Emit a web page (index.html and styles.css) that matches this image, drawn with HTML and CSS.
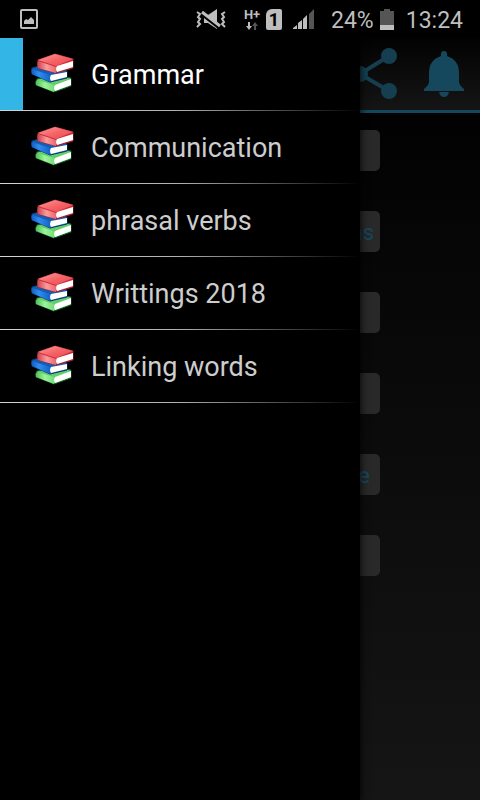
FILE: index.html
```html
<!DOCTYPE html>
<html lang="en">
<head>
<meta charset="utf-8">
<meta name="viewport" content="width=device-width, initial-scale=1">
<title>Grammar</title>
<link rel="stylesheet" href="styles.css">
</head>
<body>
<svg class="defs" width="0" height="0" aria-hidden="true">
  <defs>
    <linearGradient id="redTop" x1="0" y1="0" x2="1" y2="1"><stop offset="0" stop-color="#ff9a9a"/><stop offset=".5" stop-color="#f56468"/><stop offset="1" stop-color="#e8484e"/></linearGradient>
    <linearGradient id="redSide" x1="0" y1="0" x2="1" y2="0"><stop offset="0" stop-color="#c8444c"/><stop offset=".5" stop-color="#ff9a9c"/><stop offset="1" stop-color="#e8686e"/></linearGradient>
    <linearGradient id="blueSide" x1="0" y1="0" x2="1" y2="0"><stop offset="0" stop-color="#0f5fc0"/><stop offset=".4" stop-color="#2f8cf0"/><stop offset="1" stop-color="#1765c8"/></linearGradient>
    <linearGradient id="greenSide" x1="0" y1="0" x2="1" y2="0"><stop offset="0" stop-color="#4fbd55"/><stop offset=".5" stop-color="#9df59a"/><stop offset="1" stop-color="#74dd76"/></linearGradient>
    <symbol id="books" viewBox="0 0 44 44">
      <g stroke-linejoin="round" stroke-width="1">
        <path d="M6 27l16-4 18 3v8l-17 6-18-7q-1-3 1-6z" fill="#62cf68" stroke="#0d5a2a"/>
        <path d="M6 28l17 5v7L5 33q-1-3 1-5z" fill="url(#greenSide)"/>
        <path d="M24 33l16-6v6l-16 6q-2-3 0-6z" fill="#fff"/>
        <path d="M1 16l10-3 25 6v7l-17 4L1 22q-1-3 0-6z" fill="#155cb5" stroke="#0a3674"/>
        <path d="M1 17l18 6v7L1 22q-1-3 0-5z" fill="url(#blueSide)"/>
        <path d="M20 23l16-3v5l-16 4q-2-3 0-6z" fill="#fff"/>
        <path d="M7 8L24 2l18 5v9l-17 5-18-5q-1-4 0-8z" fill="#c92c38" stroke="#9a2430"/>
        <path d="M7 8L24 2l18 5-17 7z" fill="url(#redTop)"/>
        <path d="M7 9l18 6v6L7 16q-1-4 0-7z" fill="url(#redSide)"/>
        <path d="M26 14l16-5v6l-16 5q-2-3 0-6z" fill="#fff"/>
      </g>
    </symbol>
  </defs>
</svg>
<div class="screen">
  <header class="status">
    <svg class="picture" width="18" height="20" viewBox="0 0 18 20"><rect x="1" y="1" width="16" height="18" rx="1" fill="none" stroke="#bebebe" stroke-width="2"/><path d="M4 15v-3l2-2 2 1 3-3 2 2 1 1v4z" fill="#bebebe"/></svg>
    <div class="indicators">
      <svg width="30" height="22" viewBox="0 0 30 22" fill="none" stroke="#bebebe"><path d="M1 4l3 2-2 3 2 2-2 3 2 2-3 3M29 4l-3 2 2 3-2 2 2 3-2 2 3 3" stroke-width="2"/><path d="M8 7h4l9-6v20l-9-6H8z" fill="#bebebe" stroke="none"/><path d="M6 6l18 14" stroke="#000" stroke-width="4"/><path d="M6 4l18 14" stroke="#bebebe" stroke-width="3"/></svg>
      <div class="network"><span>H+</span>
        <svg width="12" height="8" viewBox="0 0 12 8"><path d="M2 0h2v4h2L3 8 0 4h2z" fill="#bebebe"/><path d="M8 8V4H6l3-4 3 4h-2v4z" fill="#555"/></svg>
      </div>
      <span class="sim">1</span>
      <svg class="signal" width="21" height="20" viewBox="0 0 21 20" fill="#bebebe"><path d="M0 20v-1l4-3v4zM5 20v-6l4-3v9zM10 20V10l4-4v14z"/><path d="M16 20V5l5-5v20z" fill="#555"/></svg>
      <span class="level">24%</span>
      <svg class="battery" width="14" height="21" viewBox="0 0 14 21"><path d="M4 0h6v2h4v14H0V2h4z" fill="#555"/><path d="M0 16h14v5H0z" fill="#bebebe"/></svg>
      <time>13:24</time>
    </div>
  </header>
  <div class="stage">
    <main class="page">
      <div class="toolbar">
        <button class="tool" aria-label="Share"><svg width="46" height="52" viewBox="0 0 46 52"><path d="M37 8L8 26l29 17" fill="none" stroke="#153f50" stroke-width="4"/><g fill="#153f50"><circle cx="37" cy="8" r="8"/><circle cx="8" cy="26" r="8"/><circle cx="37" cy="43" r="8"/></g></svg></button>
        <button class="tool" aria-label="Notifications"><svg width="40" height="46" viewBox="0 0 40 46" fill="#15485c"><path d="M17 5V3q0-3 3-3t3 3v2q12 4 12 17v9q0 3 5 7v2H0v-2q5-4 5-7v-9Q5 9 17 5zM15 41h10q-1 5-5 5t-5-5z"/></svg></button>
      </div>
      <div class="topics">
        <button class="topic" aria-label="Topic 1"></button>
        <button class="topic wide">ns</button>
        <button class="topic" aria-label="Topic 3"></button>
        <button class="topic" aria-label="Topic 4"></button>
        <button class="topic">e</button>
        <button class="topic" aria-label="Topic 6"></button>
      </div>
    </main>
    <nav class="drawer">
      <a class="item selected" href="#grammar"><svg class="books"><use href="#books"/></svg><span>Grammar</span></a>
      <a class="item" href="#communication"><svg class="books"><use href="#books"/></svg><span>Communication</span></a>
      <a class="item" href="#phrasal"><svg class="books"><use href="#books"/></svg><span>phrasal verbs</span></a>
      <a class="item" href="#writings"><svg class="books"><use href="#books"/></svg><span>Writtings 2018</span></a>
      <a class="item" href="#linking"><svg class="books"><use href="#books"/></svg><span>Linking words</span></a>
    </nav>
  </div>
</div>
</body>
</html>
```
FILE: styles.css
```css
* { box-sizing: border-box; }
body { margin: 0; background: #000; color: #cdcdcd; font-family: Roboto, sans-serif; }
svg { display: block; flex: none; }
button { border: 0; font: inherit; }
.defs { position: absolute; }
.screen { display: flex; flex-direction: column; min-height: 100vh; }
.status { display: flex; align-items: center; justify-content: space-between; height: 38px; padding: 0 17px 0 20px; color: #bebebe; font-size: 24px; }
.indicators { display: flex; align-items: center; }
.network { display: flex; flex-direction: column; align-items: center; gap: 1px; width: 18px; margin-left: 17px; font-size: 13px; font-weight: 700; line-height: 12px; }
.sim { width: 16px; height: 21px; margin-left: 5px; border-radius: 6px 2px 2px 2px; background: #bebebe; color: #000; font-size: 18px; font-weight: 700; line-height: 21px; text-align: center; }
.signal { margin-left: 11px; }
.level, time { padding-top: 2px; font-size: 23px; }
.level { margin-left: 17px; }
.battery { margin: 0 12px 0 6px; }
.stage { position: relative; display: flex; flex: 1; }
.page { flex: 1; background: linear-gradient(#000, #151515); }
.toolbar { display: flex; align-items: center; justify-content: flex-end; gap: 26px; height: 75px; padding: 0 16px; border-bottom: 3px solid #15485c; background: linear-gradient(#020202, #151515); }
.tool { padding: 0; background: none; }
.topics { display: flex; flex-direction: column; gap: 40px; margin: 17px 100px; }
.topic { height: 41px; padding: 2px 10px 0; border-radius: 5px; background: #292929; color: #15485c; font-size: 22px; text-align: right; }
.topic.wide { padding: 2px 6px 0; }
.drawer { position: absolute; top: 0; bottom: 0; left: 0; width: 75%; background: #000; box-shadow: 0 0 8px #000; }
.item { display: flex; align-items: center; gap: 16px; height: 73px; padding: 0 0 1px 31px; background: linear-gradient(90deg, #d4d4d4, #b0b0b0 50%, #000) bottom / 100% 1px no-repeat; color: inherit; font-size: 27px; text-decoration: none; }
.item span { padding-top: 2px; }
.selected { background: linear-gradient(90deg, #d4d4d4, #b0b0b0 50%, #000) bottom / 100% 1px no-repeat, linear-gradient(#33b5e5, #33b5e5) left / 23px 100% no-repeat; color: #fff; }
.books { width: 44px; height: 44px; }
```
